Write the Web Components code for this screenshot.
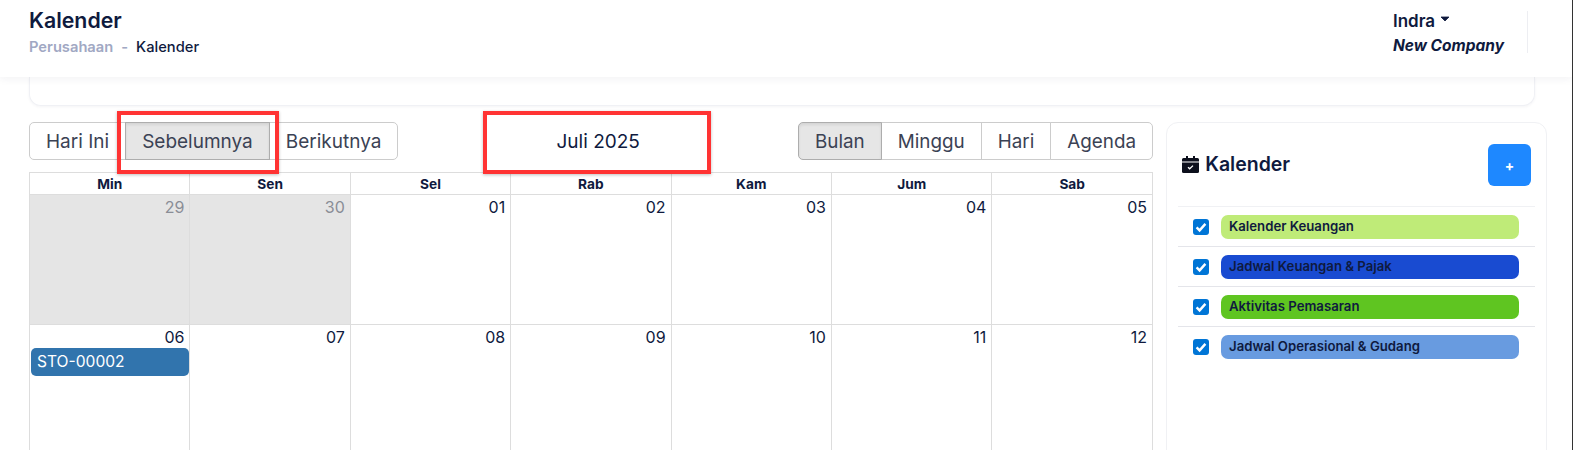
<!DOCTYPE html>
<html lang="id"><head><meta charset="utf-8"><title>Kalender</title>
<style>
html,body{margin:0;padding:0;background:#fff;height:450px;overflow:hidden}
body{font-family:Inter,"Noto Sans",sans-serif;color:#0f1a3e;position:relative;border-right:1px solid #333;width:1572px}
</style></head><body>
<app-page></app-page>
<script>
const def=(name,css,html,init)=>{customElements.define(name,class extends HTMLElement{connectedCallback(){if(this.shadowRoot)return;const r=this.attachShadow({mode:'open'});r.innerHTML=`<style>${css}</style>`+(typeof html==='function'?html(this):html);init&&init(r,this)}})};

def('app-header',`:host{display:flex;position:relative;z-index:2;height:77px;box-sizing:border-box;background:#fff;box-shadow:0 2px 8px rgba(30,40,70,.06);padding:0 44px 0 29px;justify-content:space-between;font-family:Inter,sans-serif;color:#0f1a3e}
h1{margin:7.500px 0 0;font-size:21.300px;line-height:24px;font-weight:600}
.crumb{margin-top:6.500px;font-size:14.700px;line-height:18px;font-weight:500;display:flex;gap:8px}
.crumb .m{color:#a1a8c3;font-weight:600}
.user{display:flex;margin-top:11px;height:42px}
.who{font-size:17px;font-weight:600;line-height:20px;white-space:nowrap}
.who i{display:block;margin-top:5px;font-size:15.500px;line-height:20px;font-weight:700}
.car{display:inline-block;margin-left:5px;vertical-align:5px}
.sep{width:1px;background:#edeef2;margin-left:23px}`,
`<div><h1>Kalender</h1><div class="crumb"><span class="m">Perusahaan</span><span class="m">-</span><span>Kalender</span></div></div>
<div class="user"><div class="who">Indra<svg class="car" width="10" height="6" viewBox="0 0 10 6"><path d="M1 1h8L5 5z" fill="#0f1a3e" stroke="#0f1a3e" stroke-width=".8" stroke-linejoin="round"/></svg><i>New Company</i></div><div class="sep"></div></div>`);

def('top-card',`:host{display:block;height:29px;margin:0 37px 0 29px;box-sizing:border-box;background:#fff;border:1px solid #f0f1f5;border-top:0;border-radius:0 0 12px 12px;box-shadow:0 1px 3px rgba(30,40,70,.05)}`,``);

def('fc-btn',`:host{display:block;position:relative;box-sizing:border-box;height:38px;padding:0 16px;font-size:19px;line-height:38px;color:#3b4254;border:1px solid #ccc;background:#fff;font-family:Inter,sans-serif;white-space:nowrap}
:host([active]){background:#e6e6e6;border-color:#adadad;box-shadow:inset 0 2px 3px rgba(0,0,0,.08);z-index:1}`,`<slot></slot>`);

def('fc-group',`:host{display:flex;border-radius:4px}
::slotted(fc-btn:first-child){border-radius:5px 0 0 5px}
::slotted(fc-btn:last-child){border-radius:0 5px 5px 0}
::slotted(fc-btn:not(:first-child)){margin-left:-1px}`,`<slot></slot>`);

def('fc-toolbar',`:host{display:flex;justify-content:space-between;align-items:center;height:38px}
.t{font-size:19px;font-weight:400;color:#0f1a3e;text-align:center}`,
`<div><slot name="left"></slot></div><div class="t"><slot name="title"></slot></div><div><slot name="right"></slot></div>`);

def('day-cell',`:host{display:block;box-sizing:border-box;border-right:1px solid #ddd;border-bottom:1px solid #ddd;font-family:Inter,sans-serif;color:#0f1a3e;min-width:0}
:host(:nth-child(7n)){border-right:0}
:host([off]){background:#e5e5e5;color:#8a8d96}
.n{display:block;text-align:right;font-size:16px;line-height:20px;padding:1.500px 5px 0 0}
::slotted(*){margin:1.500px 0 0 1px}`,(h)=>`<span class="n">${h.getAttribute('n')}</span><slot></slot>`);

def('cal-event',`:host{display:block;height:28px;box-sizing:border-box;background:#3174ad;border-radius:5px;color:#fff;font-size:15.600px;line-height:27px;padding-left:6px;font-family:Inter,sans-serif}`,`<slot></slot>`);

def('month-grid',`:host{display:block;margin-top:12px;font-family:Inter,sans-serif}
.g,.b{display:grid;grid-template-columns:repeat(6,160.400px) minmax(0,1fr);border:1px solid #ddd;box-sizing:border-box;width:1124px}
.g{border-bottom:0}
.b{border-top:0;border-bottom:0;grid-auto-rows:130px}
.h{font-size:13.700px;font-weight:700;line-height:23px;height:22px;box-sizing:border-box;text-align:center;border-right:1px solid #ddd;border-bottom:1px solid #ddd;color:#0f1a3e}
.h:nth-child(7){border-right:0}`,
`<div class="g">${['Min','Sen','Sel','Rab','Kam','Jum','Sab'].map(d=>`<div class="h">${d}</div>`).join('')}</div><div class="b"><slot></slot></div>`);

def('cal-main',`:host{display:block;width:1124px}`,`<slot></slot>`);

def('cal-item',`:host{display:flex;align-items:flex-start;height:40px;box-sizing:border-box;border-top:1px solid #e4e5ea;padding:8px 0 0 15px;font-family:Inter,sans-serif}
:host(:first-of-type){border-top-color:#f0f1f4}
.c{width:16px;height:16px;margin-top:4px;border-radius:3px;background:#0075d6;flex:none;display:block}
.p{margin-left:12px;width:298px;height:24px;border-radius:7px;background:var(--c);font-size:13.200px;font-weight:600;line-height:23px;padding-left:8px;box-sizing:border-box;color:#0f1a3e}`,
`<svg class="c" viewBox="0 0 16 16"><path d="M3.600 8.400 6.600 11.400 12.400 4.900" fill="none" stroke="#fff" stroke-width="2.400"/></svg><div class="p"><slot></slot></div>`);

def('cal-side',`:host{display:block;width:381px;height:345px;box-sizing:border-box;margin-left:13px;background:#fff;border:1px solid #f0f1f4;border-radius:12px;padding:21px 11px 0;font-family:Inter,sans-serif;color:#0f1a3e}
.top{display:flex;align-items:center;justify-content:space-between;height:42px;margin-bottom:20px;padding-right:4px}
.t{display:flex;align-items:center;gap:6.500px;font-size:19.500px;font-weight:600;padding-left:3.700px;margin-top:-2px}
.add{width:43px;height:42px;border-radius:6px;background:#1e88ff;color:#fff;font-size:14px;font-weight:700;display:flex;align-items:center;justify-content:center}`,
`<div class="top"><div class="t"><svg width="17" height="17" viewBox="0 0 17 17"><path fill="#0c0f1c" d="M4 0h2v2h5V0h2v2h2.500A1.500 1.500 0 0 1 17 3.500V5.500H0V3.500A1.500 1.500 0 0 1 1.500 2H4z"/><path fill="#0c0f1c" d="M0 6.500h17v9a1.500 1.500 0 0 1-1.500 1.500h-14A1.500 1.500 0 0 1 0 15.500z"/><path d="M6 11.200 7.700 12.800 11 9.600" fill="none" stroke="#fff" stroke-width="1.300"/></svg>Kalender</div><div class="add">+</div></div><slot></slot>`);

def('app-page',`:host{display:block;height:450px;overflow:hidden;position:relative;font-family:Inter,sans-serif}
.m{display:flex;margin:16px 0 0 29px;align-items:flex-start}
.ann{position:absolute;box-sizing:border-box;border:4px solid #ff3333;box-shadow:0 1px 3px rgba(0,0,0,.25);z-index:3}
.a1{left:117px;top:111px;width:162px;height:63px}
.a2{left:483px;top:111px;width:228px;height:63px}`,
`<app-header></app-header><top-card></top-card>
<div class="m"><cal-main>
<fc-toolbar>
<fc-group slot="left"><fc-btn>Hari Ini</fc-btn><fc-btn active>Sebelumnya</fc-btn><fc-btn>Berikutnya</fc-btn></fc-group>
<span slot="title">Juli 2025</span>
<fc-group slot="right"><fc-btn active style="font-size:18.850px">Bulan</fc-btn><fc-btn style="font-size:18.850px">Minggu</fc-btn><fc-btn style="font-size:18.850px">Hari</fc-btn><fc-btn style="font-size:18.850px">Agenda</fc-btn></fc-group>
</fc-toolbar>
<month-grid>
<day-cell n="29" off></day-cell><day-cell n="30" off></day-cell><day-cell n="01"></day-cell><day-cell n="02"></day-cell><day-cell n="03"></day-cell><day-cell n="04"></day-cell><day-cell n="05"></day-cell>
<day-cell n="06"><cal-event>STO-00002</cal-event></day-cell><day-cell n="07"></day-cell><day-cell n="08"></day-cell><day-cell n="09"></day-cell><day-cell n="10"></day-cell><day-cell n="11"></day-cell><day-cell n="12"></day-cell>
</month-grid>
</cal-main>
<cal-side>
<cal-item style="--c:#bfeb78">Kalender Keuangan</cal-item>
<cal-item style="--c:#194bd1">Jadwal Keuangan &amp; Pajak</cal-item>
<cal-item style="--c:#5fc521">Aktivitas Pemasaran</cal-item>
<cal-item style="--c:#689be0">Jadwal Operasional &amp; Gudang</cal-item>
</cal-side></div>
<div class="ann a1"></div><div class="ann a2"></div>`);
</script>
</body></html>
